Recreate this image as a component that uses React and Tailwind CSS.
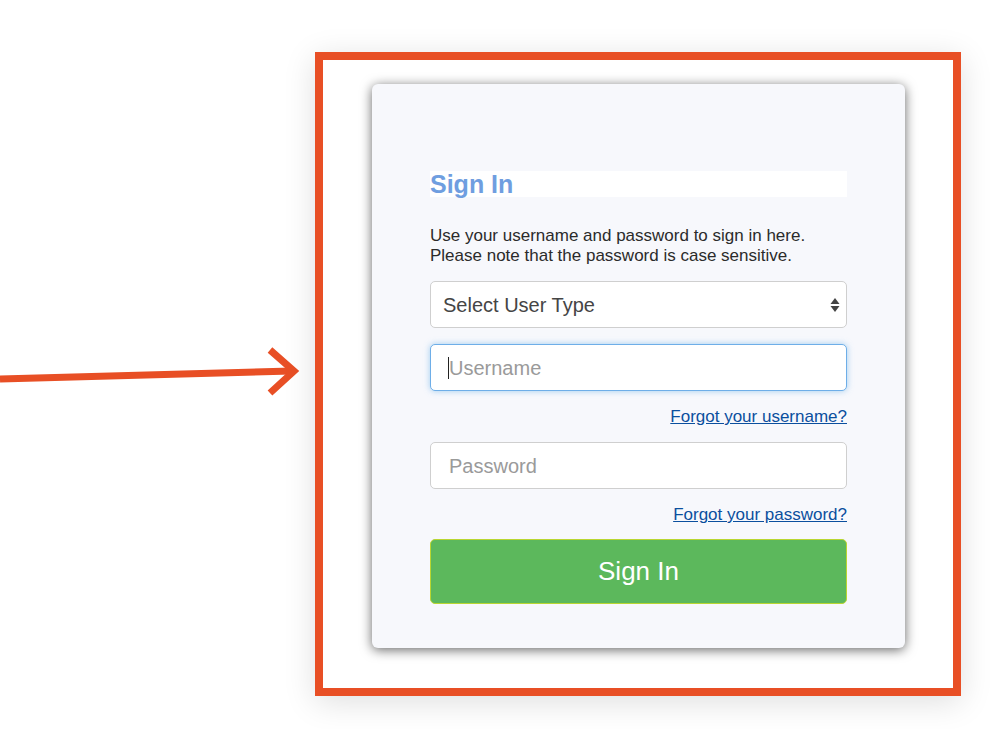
const App = () => {
  return (
    <div
      className="w-[1008px] h-[729px] bg-white flex items-center pt-[52px] pb-[33px] overflow-hidden"
      style={{ fontFamily: '"Liberation Sans", Arial, sans-serif' }}
    >
      {/* annotation arrow */}
      <div className="w-[315px] shrink-0 flex items-center">
        <svg width="310" height="60" viewBox="0 0 310 60">
          <line x1="0" y1="35" x2="292" y2="27" stroke="#e84f25" strokeWidth="7" />
          <polyline
            points="270,6 294,27 270,49"
            fill="none"
            stroke="#e84f25"
            strokeWidth="7"
          />
        </svg>
      </div>

      {/* highlighted frame */}
      <div className="w-[646px] h-[644px] shrink-0 border-[8px] border-[#e84f25] bg-white shadow-[0_6px_30px_rgba(0,0,0,0.13)] pt-[24px] pl-[49px]">
        <div className="w-[533px] h-[564px] rounded-[6px] bg-[#f7f8fc] shadow-[0_2px_12px_rgba(0,0,0,0.6)] px-[58px] pt-[87px] flex flex-col">
          <div className="h-[26px] bg-white flex items-center">
            <h1 className="text-[25px] font-bold text-[#6f9ee0] leading-none">Sign In</h1>
          </div>

          <p className="mt-[29px] text-[17px] leading-[20px] text-[#2b2b2b]">
            Use your username and password to sign in here.
            <br />
            Please note that the password is case sensitive.
          </p>

          <div className="mt-[15px] h-[47px] rounded-[5px] border border-[#cfcfcf] bg-white flex items-center justify-between pl-[12px] pr-[6px]">
            <span className="text-[20px] text-[#454545]">Select User Type</span>
            <svg width="10" height="18" viewBox="0 0 10 18">
              <polygon points="5,2 9.5,8 0.5,8" fill="#444" />
              <polygon points="0.5,10 9.5,10 5,16" fill="#444" />
            </svg>
          </div>

          <div className="mt-[16px] h-[47px] rounded-[5px] border border-[#6eaee8] bg-white shadow-[0_0_6px_rgba(102,175,233,0.6)] flex items-center pl-[17px]">
            <span className="w-px h-[22px] bg-[#222]" />
            <span className="text-[20px] text-[#9a9a9a]">Username</span>
          </div>

          <div className="mt-[16px] flex justify-end">
            <a href="#" className="text-[17px] leading-[20px] text-[#0b4f9e] underline">
              Forgot your username?
            </a>
          </div>

          <div className="mt-[15px] h-[47px] rounded-[5px] border border-[#cfcfcf] bg-white flex items-center pl-[18px]">
            <span className="text-[20px] text-[#9a9a9a]">Password</span>
          </div>

          <div className="mt-[16px] flex justify-end">
            <a href="#" className="text-[17px] leading-[20px] text-[#0b4f9e] underline">
              Forgot your password?
            </a>
          </div>

          <button className="mt-[14px] h-[65px] rounded-[5px] border border-[#b9d631] bg-[#5cb85c] text-white text-[26px]">
            Sign In
          </button>
        </div>
      </div>
    </div>
  );
};

export default App;
